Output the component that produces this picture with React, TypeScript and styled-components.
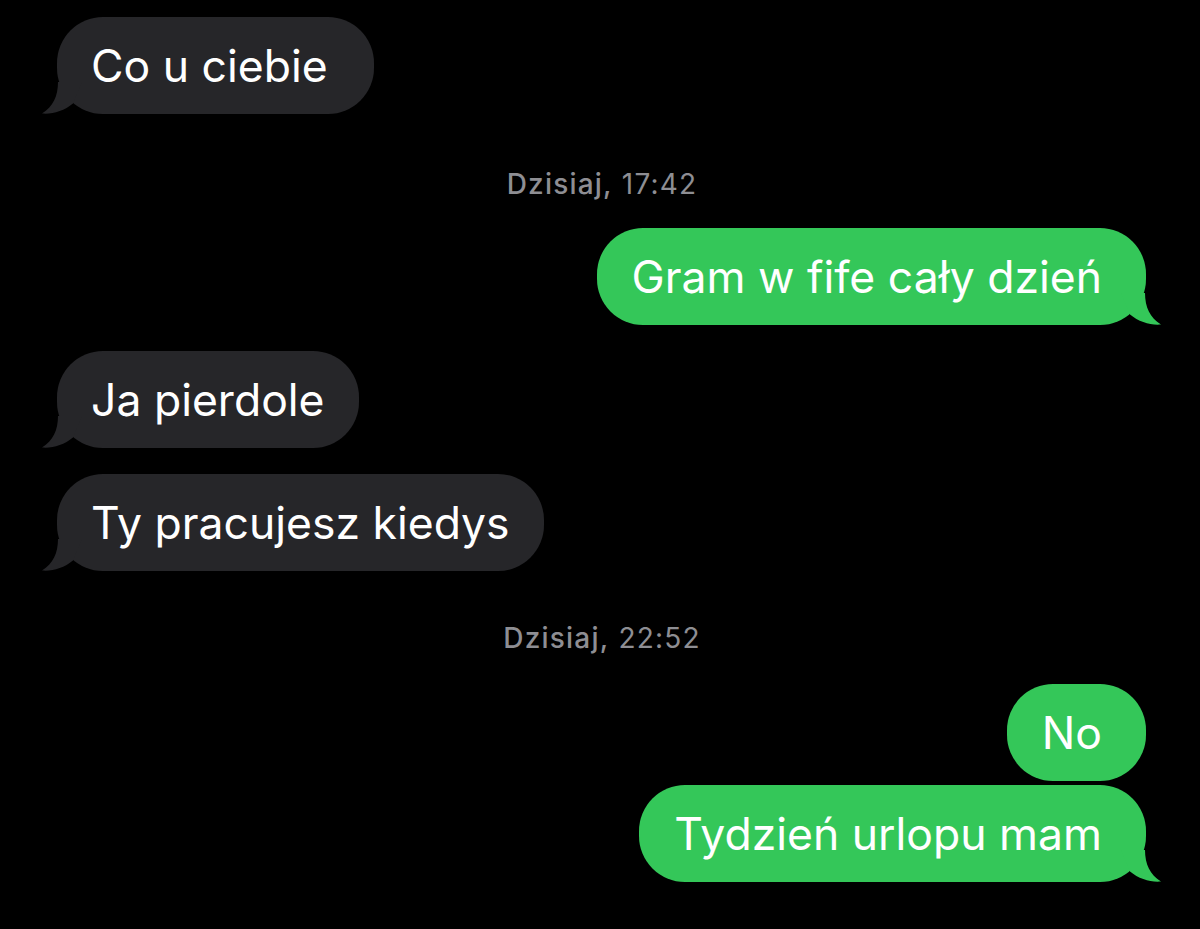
import React from "react";
import styled, { createGlobalStyle } from "styled-components";

const Global = createGlobalStyle`
  html, body { margin: 0; padding: 0; background: #000; }
  body { font-family: Inter, "Open Sans", "Liberation Sans", sans-serif; -webkit-font-smoothing: antialiased; }
`;

const Thread = styled.div`
  width: 1200px;
  height: 929px;
  background: #000;
  display: flex;
  flex-direction: column;
  overflow: hidden;
`;

const Row = styled.div<{ $side: "in" | "out"; $top: number }>`
  display: flex;
  justify-content: ${(p) => (p.$side === "in" ? "flex-start" : "flex-end")};
  padding: ${(p) => (p.$side === "in" ? "0 0 0 57px" : "0 54px 0 0")};
  margin-top: ${(p) => p.$top}px;
`;

const Bubble = styled.div<{ $side: "in" | "out" }>`
  position: relative;
  height: 97px;
  box-sizing: border-box;
  display: flex;
  align-items: center;
  padding: ${(p) => (p.$side === "in" ? "0 34px 0 34px" : "0 44px 0 35px")};
  border-radius: 46px;
  background: ${(p) => (p.$side === "in" ? "#262629" : "#34c759")};
  color: #fff;
  font-size: 44.5px;
  font-weight: 400;
  white-space: pre;
`;

const Tail = styled.svg<{ $side: "in" | "out" }>`
  position: absolute;
  bottom: 0;
  width: 40px;
  height: 32px;
  ${(p) =>
    p.$side === "in"
      ? "left: -15px;"
      : "right: -15px; transform: scaleX(-1);"}
  fill: ${(p) => (p.$side === "in" ? "#262629" : "#34c759")};
`;

const Stamp = styled.div<{ $top: number }>`
  margin-top: ${(p) => p.$top}px;
  height: 32px;
  line-height: 32px;
  text-align: center;
  color: #8e8e93;
  font-size: 28px;
  font-weight: 400;
  letter-spacing: 1.2px;
  padding-left: 4px;
`;

const StampDay = styled.span`
  font-weight: 500;
`;

type Msg = { kind: "msg"; side: "in" | "out"; text: string; top: number; tail: boolean };
type Ts = { kind: "ts"; day: string; time: string; top: number };

const items: (Msg | Ts)[] = [
  { kind: "msg", side: "in", text: "Co u ciebie\u00a0", top: 17, tail: true },
  { kind: "ts", day: "Dzisiaj,", time: "17:42", top: 54 },
  { kind: "msg", side: "out", text: "Gram w fife cały dzień", top: 28, tail: true },
  { kind: "msg", side: "in", text: "Ja pierdole", top: 26, tail: true },
  { kind: "msg", side: "in", text: "Ty pracujesz kiedys", top: 26, tail: true },
  { kind: "ts", day: "Dzisiaj,", time: "22:52", top: 51 },
  { kind: "msg", side: "out", text: "No", top: 30, tail: false },
  { kind: "msg", side: "out", text: "Tydzień urlopu mam", top: 4, tail: true },
];

export default function App() {
  return (
    <>
      <Global />
      <Thread>
        {items.map((it, i) =>
          it.kind === "ts" ? (
            <Stamp key={i} $top={it.top}>
              <StampDay>{it.day}</StampDay> {it.time}
            </Stamp>
          ) : (
            <Row key={i} $side={it.side} $top={it.top}>
              <Bubble $side={it.side}>
                {it.tail && (
                  <Tail $side={it.side} viewBox="0 0 40 32">
                    <path d="M16 0 C16 14 11 25 0 31.5 C10 32.5 22 29 31 21.5 L40 0 Z" />
                  </Tail>
                )}
                {it.text}
              </Bubble>
            </Row>
          )
        )}
      </Thread>
    </>
  );
}
